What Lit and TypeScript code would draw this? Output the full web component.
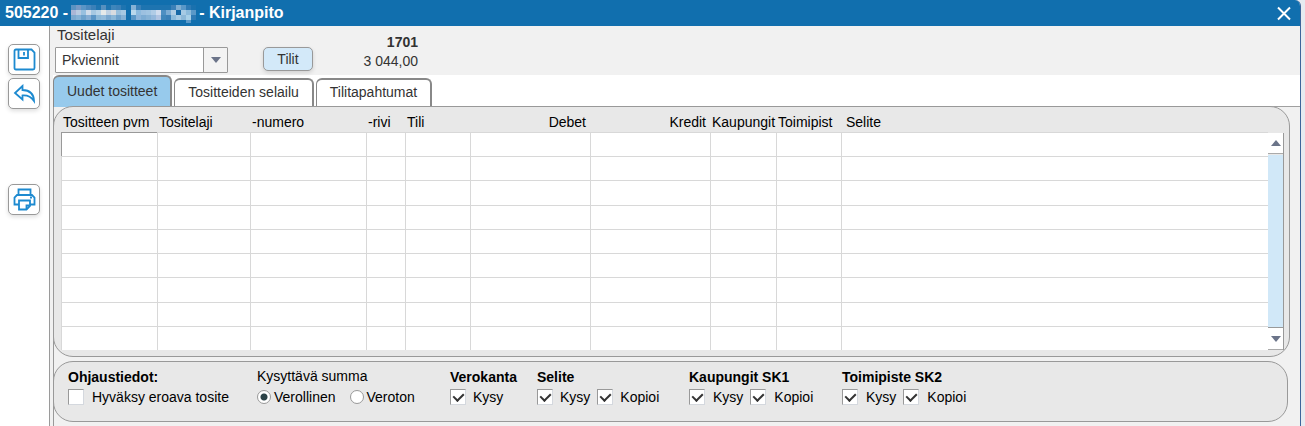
import { LitElement, html, svg, css } from "lit";
import { customElement, state } from "lit/decorators.js";

interface Column {
  key: string;
  label: string;
}

interface Option {
  label: string;
  checked: boolean;
}

interface OptionGroup {
  key: string;
  title: string;
  options: Option[];
}

const COLUMNS: Column[] = [
  { key: "date", label: "Tositteen pvm" },
  { key: "type", label: "Tositelaji" },
  { key: "number", label: "-numero" },
  { key: "row", label: "-rivi" },
  { key: "account", label: "Tili" },
  { key: "debit", label: "Debet" },
  { key: "credit", label: "Kredit" },
  { key: "city", label: "Kaupungit" },
  { key: "office", label: "Toimipist" },
  { key: "note", label: "Selite" },
];

const TABS = ["Uudet tositteet", "Tositteiden selailu", "Tilitapahtumat"];
const ROWS = Array.from({ length: 9 }, (_, i) => i);

const GROUPS: OptionGroup[] = [
  { key: "vat", title: "Verokanta", options: [{ label: "Kysy", checked: true }] },
  {
    key: "text",
    title: "Selite",
    options: [
      { label: "Kysy", checked: true },
      { label: "Kopioi", checked: true },
    ],
  },
  {
    key: "sk1",
    title: "Kaupungit SK1",
    options: [
      { label: "Kysy", checked: true },
      { label: "Kopioi", checked: true },
    ],
  },
  {
    key: "sk2",
    title: "Toimipiste SK2",
    options: [
      { label: "Kysy", checked: true },
      { label: "Kopioi", checked: true },
    ],
  },
];

// Redacted company name: a mosaic of 5px tiles, "-" is an empty tile.
const MOSAIC = [
  "5b92c2 7799c5 5a95c6 4a88be 3a80b8 1e74b0 5690bf 1e74b0 3f86bb 3a80b8 1e74b0 - 86b2d6 3a80b8 1e74b0 1e74b0 1e74b0 1e74b0 1e74b0 1e74b0 3a80b8 7faed2 5a98c8 2e7ab5 1a71ae",
  "aab6d6 b9cbe2 98c0df d0dcea a6c8e2 b9d4e8 e6eaea c0d2e4 d8dce0 98bfdc a6c8e2 - b9d8ec 8cbade 9cc0e0 a0c4e2 b0cce6 d0dcee 4e8fc2 7cacd4 b0cde4 1668a6 a6cae4 8cbbdc 5a98c8",
  "7ba9d0 86b2d6 6ea2cc 86aed4 5a95c6 8cb8d8 94bcdc 7ba9d0 8cb8d8 6ea2cc 86b2d6 - 5a98c8 8cb4da 7cacd4 86b2d6 94b8dc b0c4e2 3f86bb 3a80b8 8cbbdc a6cae4 8cb8d8 a8d0e8 2e7ab5",
  "- - - - - - - - - - - - - - - - - - - - - - - 5a98c8 -",
].map((row) => row.split(" "));

const saveIcon = svg`<path d="M3 1.500h15.500l3 3V20q0 1.500-1.500 1.500H3Q1.500 21.500 1.500 20V3Q1.500 1.500 3 1.500z"/><path d="M5.500 2v8h9.500V2M11 4v3.500"/>`;
const undoIcon = svg`<path d="M9.500 4L2 11l7.500 6.500v-4c5-.4 8.500 1 11.500 5.500-.2-7-4-10.800-11.500-11z"/>`;
const printIcon = svg`<path d="M5.500 7V1.500h12V7M6 16.500H1.500V9.500L4 7h15l2.500 2.500v7H17M6 12.500h11V18l-3.500 3.500H6z"/><path d="M17 9.500h2M13.500 21v-3.500h3"/>`;

@customElement("app-root")
export class AppRoot extends LitElement {
  static styles = css`
    :host {
      display: block;
      height: 100vh;
      overflow: hidden;
      background: #e6ebf1;
      font: 14px/18px "Liberation Sans", Arial, sans-serif;
      color: #111;
    }
    * {
      box-sizing: border-box;
    }
    button,
    select,
    input {
      margin: 0;
      font: inherit;
      color: inherit;
    }
    .window {
      display: flex;
      flex-direction: column;
      height: 100%;
      margin-right: 4px;
      border-right: 1px solid #3d659b;
      border-top-right-radius: 6px;
      background: #f1f1f1;
      overflow: hidden;
    }
    .titlebar {
      display: flex;
      align-items: center;
      flex: none;
      height: 26px;
      padding: 0 8px 0 5px;
      background: #116fae;
      color: #fff;
    }
    .title {
      display: flex;
      flex: 1;
      gap: 3px;
      margin: 0;
      font-size: 16px;
      line-height: 24px;
    }
    .mosaic {
      width: 125px;
      height: 24px;
    }
    .close {
      display: flex;
      padding: 0;
      border: 0;
      background: none;
    }
    .close svg {
      width: 16px;
      height: 16px;
      stroke: #fff;
      stroke-width: 2;
    }
    .frame {
      display: flex;
      flex: 1;
      min-height: 0;
    }
    .sidebar {
      display: flex;
      flex-direction: column;
      align-items: center;
      flex: none;
      gap: 3px;
      width: 50px;
      padding: 18px 1px 0 0;
      border-right: 1px solid #9a9a9a;
      background: #fff;
    }
    .tool {
      display: flex;
      align-items: center;
      justify-content: center;
      width: 32px;
      height: 31px;
      padding: 0;
      border: 1px solid #999;
      border-radius: 5px;
      background: #fff;
      box-shadow: 0 2px 4px #0002;
    }
    .tool.print {
      margin-top: 72px;
    }
    .tool svg {
      width: 23px;
      height: 23px;
      fill: none;
      stroke: #1d8ad0;
      stroke-width: 1.8;
    }
    .main {
      flex: 1;
      min-width: 0;
      padding-left: 3px;
    }
    .toolbar {
      display: flex;
      height: 49px;
      padding-left: 2px;
      color: #333;
    }
    .kind {
      display: flex;
      flex-direction: column;
      width: 173px;
    }
    .kind label {
      height: 21px;
      padding-left: 2px;
      font-size: 15px;
      line-height: 17px;
    }
    .combo {
      position: relative;
    }
    .combo select {
      display: block;
      width: 100%;
      height: 26px;
      padding: 0 28px 0 6px;
      border: 1px solid #999;
      border-radius: 1px;
      background: #fff;
      appearance: none;
    }
    .combo .arrow {
      position: absolute;
      inset: 1px 1px 1px auto;
      display: flex;
      align-items: center;
      justify-content: center;
      width: 24px;
      border-left: 1px solid #999;
      background: #f3f3f3;
      pointer-events: none;
    }
    .accounts {
      width: 50px;
      height: 24px;
      margin: 21px 0 0 35px;
      padding: 0;
      border: 1px solid #999;
      border-radius: 5px;
      background: #d3e9f9;
      box-shadow: 0 2px 4px #0002;
    }
    .totals {
      width: 105px;
      padding-top: 7px;
      line-height: 19px;
      text-align: right;
    }
    .totals strong {
      display: block;
    }
    .tabs {
      display: flex;
      align-items: flex-end;
      gap: 2px;
      height: 32px;
      border-bottom: 1px solid #a0a0a0;
      background: #fff;
    }
    .tab {
      height: 28px;
      padding: 0 13px 2px;
      border: 1px solid #888;
      border-width: 2px 2px 0 1px;
      border-radius: 6px 6px 0 0;
      background: #fff;
      color: #333;
    }
    .tab.active {
      height: 32px;
      margin-bottom: -1px;
      background: #97caec;
    }
    .content {
      display: flex;
      flex-direction: column;
      gap: 4px;
      height: 100%;
      margin-top: -1px;
      border-left: 1px solid #999;
    }
    .panel {
      margin-left: -1px;
      border: 1px solid #999;
      background: #e8e8e8;
    }
    .entries {
      display: flex;
      margin-right: 10px;
      padding: 0 5px 6px 7px;
      border-radius: 20px;
    }
    .table {
      flex: 1;
      min-width: 0;
      height: 243px;
      border-spacing: 0;
      table-layout: fixed;
      color: #000;
    }
    .col-date {
      width: 96px;
    }
    .col-type {
      width: 93px;
    }
    .col-number {
      width: 116px;
    }
    .col-row {
      width: 39px;
    }
    .col-account,
    .col-office {
      width: 65px;
    }
    .col-debit,
    .col-credit {
      width: 120px;
    }
    .col-city {
      width: 66px;
    }
    th {
      height: 25px;
      padding: 5px 0 0 2px;
      font-weight: normal;
      text-align: left;
      white-space: nowrap;
    }
    th.debit,
    th.credit {
      padding-right: 4px;
      text-align: right;
    }
    th.note {
      padding-left: 5px;
    }
    td {
      padding: 0;
      border: 1px solid #d8d8d8;
      border-width: 1px 0 0 1px;
      background: #fff;
    }
    td.current {
      border-color: #999;
    }
    .scroll {
      display: grid;
      grid-template-rows: 21px 1fr 22px;
      width: 16px;
      margin-top: 26px;
      border-right: 1px solid #999;
    }
    .scroll button {
      display: flex;
      align-items: center;
      justify-content: center;
      padding: 0;
      border: 0;
      border-bottom: 1px solid #aaa;
      background: #fff;
    }
    .thumb {
      margin-top: 1px;
      border-bottom: 1px solid #999;
      background: #d1e8f8;
    }
    .controls {
      display: grid;
      grid-template-columns: 189px 193px 87px 152px 153px 1fr;
      height: 61px;
      margin-right: 12px;
      padding: 6px 14px;
      border-radius: 20px;
      color: #000;
      white-space: nowrap;
    }
    fieldset {
      min-width: 0;
      margin: 0;
      padding: 0;
      border: 0;
    }
    legend {
      height: 20px;
      padding: 0;
      font-weight: bold;
    }
    .plain legend {
      font-weight: normal;
      line-height: 16px;
    }
    .options {
      display: flex;
      gap: 7px;
    }
    .option {
      display: flex;
      align-items: center;
      gap: 7px;
    }
    .sk1 .option,
    .sk2 .option,
    .accept .option {
      gap: 8px;
    }
    .plain .options {
      gap: 14px;
    }
    .plain .option {
      gap: 3px;
    }
    input[type="checkbox"] {
      width: 16px;
      height: 16px;
      border: 1px solid #d4d8de;
      border-top-color: #999;
      border-left-color: #999;
      background: #fff;
      appearance: none;
    }
    input[type="checkbox"]:checked::before {
      content: "";
      display: block;
      width: 5px;
      height: 8px;
      margin: 1px 0 0 4px;
      border: solid #333;
      border-width: 0 2px 2px 0;
      transform: rotate(45deg);
    }
    input[type="radio"] {
      width: 14px;
      height: 14px;
      border: 1px solid #999;
      border-radius: 50%;
      background: #fff;
      appearance: none;
    }
    input[type="radio"]:checked {
      background: radial-gradient(circle, #2b4247 3px, #fff 4px);
    }
  `;

  @state() private tab = 0;

  private toolButton(name: string, label: string, icon: unknown) {
    return html`<button class="tool ${name}" type="button" aria-label=${label}>
      <svg viewBox="0 0 23 23">${icon}</svg>
    </button>`;
  }

  private checkbox(option: Option) {
    return html`<label class="option">
      <input type="checkbox" .checked=${option.checked} />${option.label}
    </label>`;
  }

  private triangle(down: boolean) {
    return html`<svg width="10" height="6" viewBox="0 0 10 6" fill="#6b7489">
      <path d=${down ? "M0 0h10L5 6z" : "M0 6h10L5 0z"} />
    </svg>`;
  }

  render() {
    return html`
      <div class="window">
        <header class="titlebar">
          <h1 class="title">
            <span>505220 -</span>
            <svg class="mosaic" viewBox="0 0 125 24" aria-hidden="true" shape-rendering="crispEdges">
              ${MOSAIC.map((row, y) =>
                row.map((fill, x) =>
                  fill === "-"
                    ? null
                    : svg`<rect x=${x * 5} y=${4 + y * 5} width="5" height=${y === 3 ? 3 : 5} fill=${"#" + fill} />`,
                ),
              )}
            </svg>
            <span>- Kirjanpito</span>
          </h1>
          <button class="close" type="button" aria-label="Sulje">
            <svg viewBox="0 0 16 16"><path d="M2 2.500l12 12M14 2.500l-12 12" /></svg>
          </button>
        </header>
        <div class="frame">
          <nav class="sidebar">
            ${this.toolButton("save", "Tallenna", saveIcon)}
            ${this.toolButton("undo", "Peruuta", undoIcon)}
            ${this.toolButton("print", "Tulosta", printIcon)}
          </nav>
          <main class="main">
            <div class="toolbar">
              <div class="kind">
                <label for="kind">Tositelaji</label>
                <div class="combo">
                  <select id="kind"><option>Pkviennit</option></select>
                  <span class="arrow">${this.triangle(true)}</span>
                </div>
              </div>
              <button class="accounts" type="button">Tilit</button>
              <div class="totals"><strong>1701</strong>3 044,00</div>
            </div>
            <div class="tabs" role="tablist">
              ${TABS.map(
                (label, i) => html`<button
                  class="tab ${i === this.tab ? "active" : ""}"
                  type="button"
                  role="tab"
                  aria-selected=${i === this.tab}
                  @click=${() => (this.tab = i)}
                >${label}</button>`,
              )}
            </div>
            <div class="content">
              <section class="panel entries">
                <table class="table">
                  <colgroup>
                    ${COLUMNS.map((c) => html`<col class="col-${c.key}" />`)}
                  </colgroup>
                  <thead>
                    <tr>${COLUMNS.map((c) => html`<th class=${c.key} scope="col">${c.label}</th>`)}</tr>
                  </thead>
                  <tbody>
                    ${ROWS.map(
                      (r) => html`<tr>
                        ${COLUMNS.map((_, c) => html`<td class=${r === 0 && c === 0 ? "current" : ""}></td>`)}
                      </tr>`,
                    )}
                  </tbody>
                </table>
                <div class="scroll">
                  <button type="button" aria-label="Ylös">${this.triangle(false)}</button>
                  <div class="thumb"></div>
                  <button type="button" aria-label="Alas">${this.triangle(true)}</button>
                </div>
              </section>
              <section class="panel controls">
                <fieldset class="accept">
                  <legend>Ohjaustiedot:</legend>
                  <div class="options">
                    ${this.checkbox({ label: "Hyväksy eroava tosite", checked: false })}
                  </div>
                </fieldset>
                <fieldset class="plain">
                  <legend>Kysyttävä summa</legend>
                  <div class="options">
                    <label class="option"><input type="radio" name="sum" checked />Verollinen</label>
                    <label class="option"><input type="radio" name="sum" />Veroton</label>
                  </div>
                </fieldset>
                ${GROUPS.map(
                  (g) => html`<fieldset class=${g.key}>
                    <legend>${g.title}</legend>
                    <div class="options">${g.options.map((o) => this.checkbox(o))}</div>
                  </fieldset>`,
                )}
              </section>
            </div>
          </main>
        </div>
      </div>
    `;
  }
}
